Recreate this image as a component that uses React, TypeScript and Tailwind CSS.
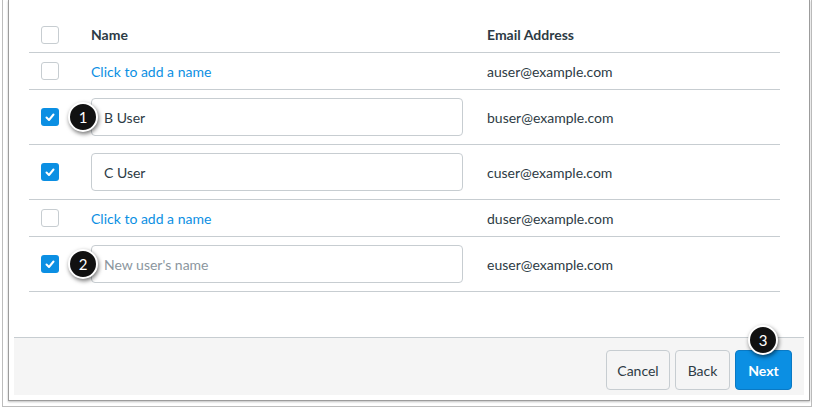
import React from 'react';

const Check = () => (
  <svg width="12" height="12" viewBox="0 0 12 12" fill="none" stroke="white" strokeWidth="2" strokeLinecap="round" strokeLinejoin="round">
    <polyline points="2.5 6.5 5 9 9.5 3.5" />
  </svg>
);

const Box = ({ checked }: { checked?: boolean }) =>
  checked ? (
    <div className="w-[18px] h-[18px] rounded-[3px] bg-[#0b8fe3] flex items-center justify-center">
      <Check />
    </div>
  ) : (
    <div className="w-[18px] h-[18px] rounded-[3px] border border-[#c7cdd1] bg-white" />
  );

const Badge = ({ n, className }: { n: number; className: string }) => (
  <div
    className={
      'absolute w-[30px] h-[30px] rounded-full bg-[#111] border-2 border-white text-white text-[15px] flex items-center justify-center shadow-[1px_2px_4px_rgba(0,0,0,0.55)] ' +
      className
    }
  >
    {n}
  </div>
);

type Row = { name?: string; placeholder?: string; email: string; checked: boolean; badge?: number };

const rows: Row[] = [
  { email: 'auser@example.com', checked: false },
  { name: 'B User', email: 'buser@example.com', checked: true, badge: 1 },
  { name: 'C User', email: 'cuser@example.com', checked: true },
  { email: 'duser@example.com', checked: false },
  { placeholder: "New user's name", email: 'euser@example.com', checked: true, badge: 2 },
];

export default function App() {
  return (
    <div className="w-[814px] h-[409px] bg-white overflow-hidden text-[#2d3b45] font-['Lato','Liberation_Sans',sans-serif]">
      {/* outer frame */}
      <div className="ml-[2px] w-[810px] h-[407px] border-l border-r border-b border-[#bdbdbd] pl-[5px] pr-[1px]">
        {/* dialog */}
        <div className="h-[401px] border-l border-r border-b border-[#9c9c9c] bg-white flex flex-col px-[5px] pb-[5px] shadow-[0_1px_2px_rgba(0,0,0,0.25)]">
          <div className="h-[337px] pt-[17px] pl-[15px] pr-[24px]">
            {/* header */}
            <div className="h-[36px] flex items-center border-b border-[#c7cdd1]">
              <div className="w-[62px] pl-[12px]">
                <Box />
              </div>
              <div className="w-[396px] text-[14px] font-bold">Name</div>
              <div className="text-[14px] font-bold">Email Address</div>
            </div>
            {rows.map((r, i) => {
              const tall = r.name !== undefined || r.placeholder !== undefined;
              return (
                <div
                  key={i}
                  className={'flex items-center border-b border-[#c7cdd1] ' + (tall ? 'h-[55px]' : 'h-[37px]')}
                >
                  <div className="w-[62px] pl-[12px]">
                    <Box checked={r.checked} />
                  </div>
                  <div className="w-[396px] relative">
                    {tall ? (
                      <div className="w-[372px] h-[38px] rounded-[4px] border border-[#c7cdd1] flex items-center px-[12px] text-[14px]">
                        {r.name ? r.name : <span className="text-[#8b969e]">{r.placeholder}</span>}
                      </div>
                    ) : (
                      <span className="text-[14px] text-[#0b8fe3]">Click to add a name</span>
                    )}
                    {r.badge && <Badge n={r.badge} className="-left-[23px] top-[4px]" />}
                  </div>
                  <div className="text-[14px]">{r.email}</div>
                </div>
              );
            })}
          </div>
          {/* footer */}
          <div className="flex-1 bg-[#f5f5f5] border-t border-[#c7cdd1] flex items-start justify-end pt-[12px] pr-[12px] gap-[5px]">
            <button className="h-[40px] w-[64px] rounded-[4px] border border-[#c7cdd1] bg-[#f5f5f5] text-[14px] text-[#2d3b45]">
              Cancel
            </button>
            <button className="h-[40px] w-[55px] rounded-[4px] border border-[#c7cdd1] bg-[#f5f5f5] text-[14px] text-[#2d3b45]">
              Back
            </button>
            <div className="relative">
              <button className="h-[40px] w-[57px] rounded-[4px] border border-[#0a79c4] bg-[#0b8fe3] text-[14px] font-bold text-white">
                Next
              </button>
              <Badge n={3} className="-top-[25px] left-[13px]" />
            </div>
          </div>
        </div>
      </div>
    </div>
  );
}
